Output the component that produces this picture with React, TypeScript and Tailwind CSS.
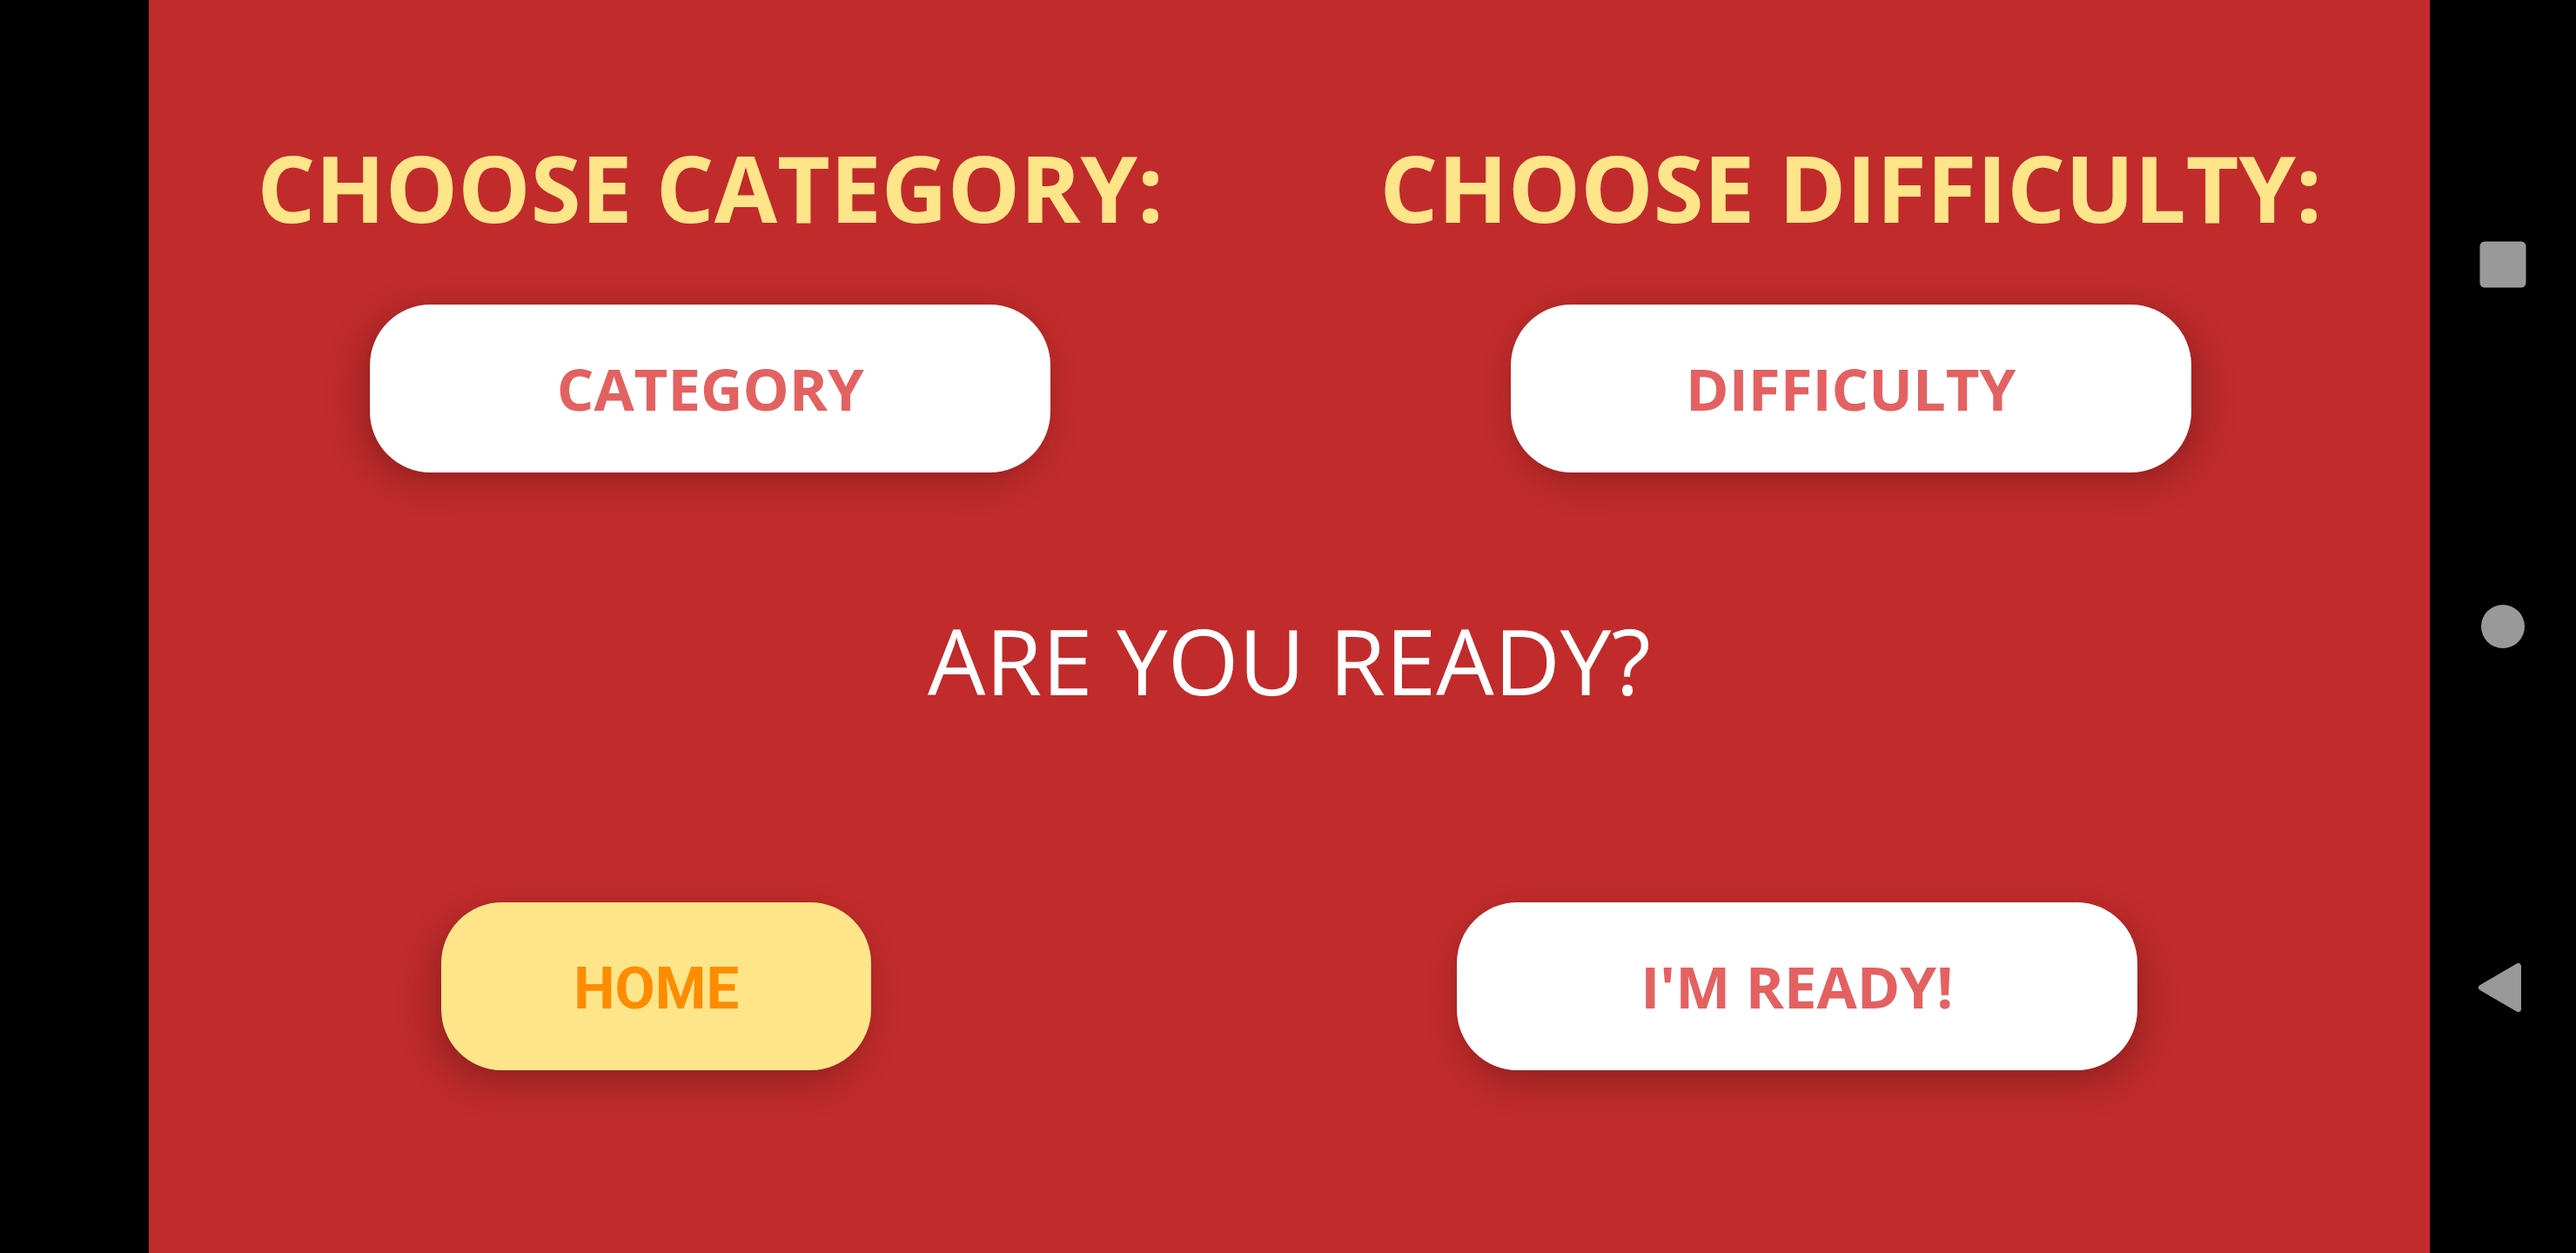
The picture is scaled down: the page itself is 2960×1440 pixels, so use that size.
import type { ReactNode } from "react";

function PillButton({ className, children }: { className: string; children: ReactNode }) {
  return (
    <button
      type="button"
      className={`flex h-[193px] items-center justify-center rounded-[70px] text-[67px] font-bold leading-none ${className}`}
    >
      {children}
    </button>
  );
}

function NavButton({ label, children }: { label: string; children: ReactNode }) {
  return (
    <button type="button" aria-label={label} className="flex w-full flex-1 items-center justify-center">
      <svg width="60" height="60" viewBox="0 0 60 60" fill="#999999" aria-hidden="true">
        {children}
      </svg>
    </button>
  );
}

const white = "w-[782px] bg-white text-[#e46161]";
const shadowLeft = "shadow-[-9px_10px_42px_rgba(0,0,0,0.22),0_2px_10px_rgba(0,0,0,0.04)]";
const shadowRight = "shadow-[9px_10px_42px_rgba(0,0,0,0.22),0_2px_10px_rgba(0,0,0,0.04)]";
const shadowHome = "shadow-[-9px_16px_42px_rgba(0,0,0,0.22),0_2px_10px_rgba(0,0,0,0.04)]";
const shadowReady = "shadow-[6px_16px_42px_rgba(0,0,0,0.22),0_2px_10px_rgba(0,0,0,0.04)]";

export default function App() {
  return (
    <div className="flex min-h-screen bg-black font-['Open_Sans',sans-serif]">
      <main className="ml-[171px] flex flex-1 flex-col bg-[#c12b2b] pt-36">
        <div className="grid grid-cols-2">
          <section className="flex flex-col items-center gap-[63px] pr-5">
            <h2 className="whitespace-nowrap text-[105px] font-bold leading-[143px] text-[#ffe58a]">CHOOSE CATEGORY:</h2>
            <PillButton className={`${white} ${shadowLeft}`}>CATEGORY</PillButton>
          </section>
          <section className="flex flex-col items-center gap-[63px] pr-5">
            <h2 className="whitespace-nowrap text-[105px] font-bold leading-[143px] text-[#ffe58a]">CHOOSE DIFFICULTY:</h2>
            <PillButton className={`${white} ${shadowRight}`}>DIFFICULTY</PillButton>
          </section>
        </div>
        <p className="mt-36 text-center text-[105px] leading-[143px] text-white">ARE YOU READY?</p>
        <div className="mt-[207px] grid grid-cols-2">
          <div className="flex justify-center pr-36">
            <PillButton className={`w-[494px] bg-[#ffe58a] pt-1.5 font-['Roboto',sans-serif] text-[#ff8c00] ${shadowHome}`}>
              HOME
            </PillButton>
          </div>
          <div className="flex justify-center pr-36">
            <PillButton className={`${white} ${shadowReady}`}>I'M READY!</PillButton>
          </div>
        </div>
      </main>
      <nav aria-label="System navigation" className="flex w-42 shrink-0 flex-col py-24">
        <NavButton label="Recent apps">
          <rect x="3.5" y="3.5" width="53" height="53" rx="5.5" />
        </NavButton>
        <NavButton label="Home">
          <circle cx="30" cy="30" r="25" />
        </NavButton>
        <NavButton label="Back">
          <path d="M5.5 29 47.5 4.5V53.5Z" stroke="#999999" strokeWidth="7" strokeLinejoin="round" />
        </NavButton>
      </nav>
    </div>
  );
}
